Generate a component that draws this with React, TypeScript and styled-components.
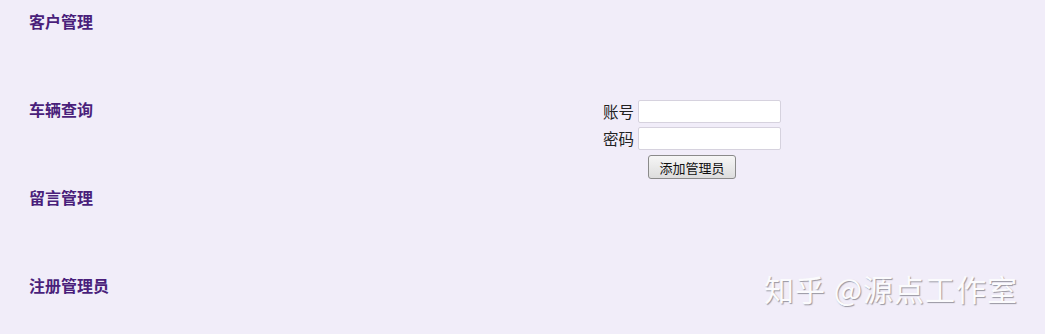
import styled, { createGlobalStyle } from "styled-components";

const GlobalStyle = createGlobalStyle`
  html, body {
    margin: 0;
    padding: 0;
    background: #f1edf9;
  }
  body {
    font-family: "Liberation Sans", "Noto Sans CJK SC", sans-serif;
  }
`;

const Page = styled.div`
  position: relative;
  display: flex;
  width: 1045px;
  height: 334px;
  overflow: hidden;
  background: #f1edf9;
`;

const Nav = styled.nav`
  display: flex;
  flex-direction: column;
  padding: 11px 0 0 29px;
  width: 304px;
  box-sizing: border-box;
`;

const NavItem = styled.div`
  flex: 0 0 88px;
  font-family: "Noto Sans CJK SC", sans-serif;
  font-size: 16px;
  line-height: 20px;
  font-weight: bold;
  color: #4a1f7b;
`;

const FormArea = styled.div`
  display: flex;
  padding: 100px 0 0 299px;
`;

const Form = styled.form`
  display: grid;
  grid-template-columns: auto 143px;
  column-gap: 4px;
  row-gap: 4px;
  align-items: center;
  align-content: start;
`;

const Label = styled.label`
  font-family: "Noto Sans CJK SC", sans-serif;
  font-size: 15.5px;
  color: #222;
  text-align: right;
  line-height: 23px;
`;

const Input = styled.input`
  box-sizing: border-box;
  width: 143px;
  height: 23px;
  margin: 0;
  border: 1px solid #d6d2de;
  border-radius: 2px;
  background: #fff;
`;

const Button = styled.button`
  grid-column: 2;
  justify-self: start;
  margin: 1px 0 0 10px;
  box-sizing: border-box;
  width: 88px;
  height: 24px;
  padding: 0;
  font-family: "Noto Sans CJK SC", sans-serif;
  font-size: 13px;
  color: #111;
  border: 1px solid #8a8a8a;
  border-radius: 3px;
  background: linear-gradient(#f6f6f6, #dddddd);
`;

const Watermark = styled.div`
  position: absolute;
  left: 764px;
  top: 268px;
  font-family: "Noto Sans CJK SC", sans-serif;
  font-size: 30px;
  line-height: 40px;
  letter-spacing: 1px;
  color: #fbfbfd;
  text-shadow: 1px 1px 1px rgba(80, 80, 90, 0.55);
  white-space: pre;
`;

export default function App() {
  return (
    <Page>
      <GlobalStyle />
      <Nav>
        <NavItem>客户管理</NavItem>
        <NavItem>车辆查询</NavItem>
        <NavItem>留言管理</NavItem>
        <NavItem>注册管理员</NavItem>
      </Nav>
      <FormArea>
        <Form onSubmit={(e) => e.preventDefault()}>
          <Label>账号</Label>
          <Input type="text" />
          <Label>密码</Label>
          <Input type="password" />
          <Button type="submit">添加管理员</Button>
        </Form>
      </FormArea>
      <Watermark>知乎 @源点工作室</Watermark>
    </Page>
  );
}
